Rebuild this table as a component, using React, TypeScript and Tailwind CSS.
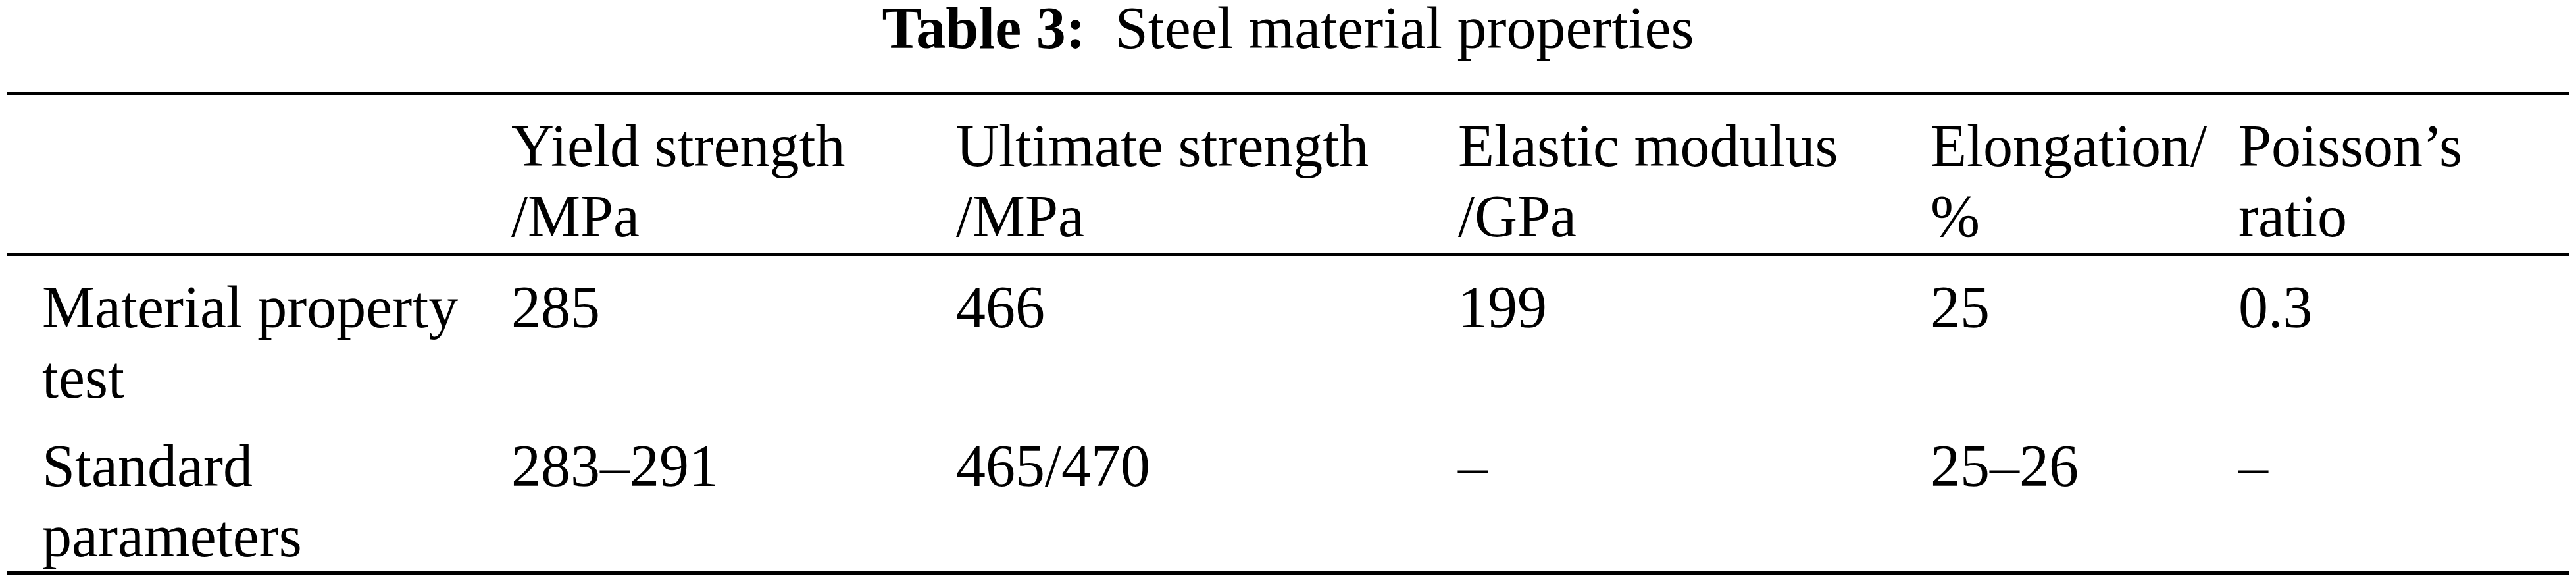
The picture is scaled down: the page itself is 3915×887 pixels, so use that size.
import React from "react";

const header = [
  [""],
  ["Yield strength", "/MPa"],
  ["Ultimate strength", "/MPa"],
  ["Elastic modulus", "/GPa"],
  ["Elongation/", "%"],
  ["Poisson\u2019s", "ratio"],
];

const rows = [
  {
    pad: "pt-[24px] pb-0",
    cells: [["Material property", "test"], ["285"], ["466"], ["199"], ["25"], ["0.3"]],
  },
  {
    pad: "pt-[27px] pb-0",
    cells: [["Standard", "parameters"], ["283\u2013291"], ["465/470"], ["\u2013"], ["25\u201326"], ["\u2013"]],
  },
];

const Cell = ({ lines }: { lines: string[] }) => (
  <div className="pl-[54px]">
    {lines.map((line, i) => (
      <div key={i} className="whitespace-nowrap h-[107px]">
        {line}
      </div>
    ))}
  </div>
);

const App = () => {
  return (
    <div className="w-[3915px] bg-white text-black font-['Liberation_Serif','Times_New_Roman',serif] text-[90px] leading-[107px]">
      <h1 className="text-center leading-[85px] mb-[55px] font-normal">
        <span className="font-bold">Table 3:</span>
        {"\u00a0\u00a0"}Steel material properties
      </h1>
      <div className="mx-[10px] border-t-[5px] border-b-[5px] border-black">
        <div className="grid grid-cols-[713px_676px_763px_718px_468px_557px] pt-[23px] pb-[2px] border-b-[5px] border-black">
          {header.map((lines, i) => (
            <Cell key={i} lines={lines} />
          ))}
        </div>
        {rows.map((row, r) => (
          <div key={r} className={`grid grid-cols-[713px_676px_763px_718px_468px_557px] ${row.pad}`}>
            {row.cells.map((lines, i) => (
              <Cell key={i} lines={lines} />
            ))}
          </div>
        ))}
      </div>
    </div>
  );
};

export default App;
